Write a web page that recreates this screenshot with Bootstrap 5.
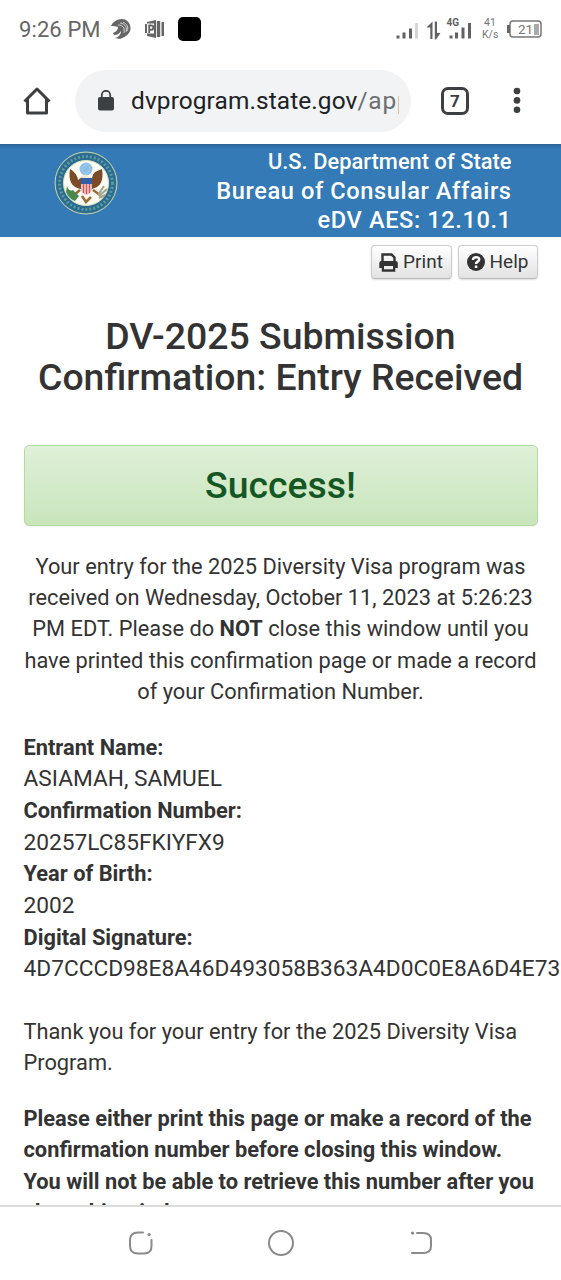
<!DOCTYPE html>
<html lang="en">
<head>
<meta charset="utf-8">
<meta name="viewport" content="width=device-width, initial-scale=1">
<title>DV-2025 Submission Confirmation</title>
<link href="https://cdn.jsdelivr.net/npm/bootstrap@5.3.0/dist/css/bootstrap.min.css" rel="stylesheet">
<style>
body{font-family:Roboto,sans-serif;font-size:21.8px;line-height:31.2px;color:#333;height:1280px;background:#fff}
svg{display:block;flex:none}
.status{height:57px;color:#666;padding:0 19px 0 19px}
.clock{font-size:22px;letter-spacing:.1px;width:92px;white-space:nowrap;padding-top:2px}
.appbox{width:23px;height:24px;border-radius:5px;background:#000}
.net{font-size:10.5px;line-height:12px;color:#777;width:16px}
.toolbar{height:87px;padding:0 0 0 23px}
.urlbar{width:336px;height:62px;background:#f1f3f4;border-radius:31px;padding-left:23px;margin-left:24px;color:#202124}
.url{font-size:24.4px;letter-spacing:.12px;width:268px;overflow:hidden;white-space:nowrap}
.url span{color:#6b6f73;letter-spacing:.8px}
.tabs{width:28px;height:28px;border:3px solid #3c4043;border-radius:7px;font-size:17px;font-weight:700;line-height:22px;color:#3c4043;margin-left:30px;text-align:center}
.site{height:93px;background:linear-gradient(#2e6396 0,#337ab7 5px);color:#fff;font-weight:500;padding:3px 50px 0 54px}
.site .org{line-height:29.5px;font-size:23.6px;letter-spacing:.6px;margin-right:-.6px}
.site .org :first-child{font-size:21.8px;letter-spacing:.05px}
.tool{height:34px;border:1px solid #ccc;border-bottom-color:#bbb;border-radius:4px;background:linear-gradient(#fff,#e2e2e2);box-shadow:0 1px 2px rgba(0,0,0,.14);font-size:19px;line-height:20px;color:#333;padding:0;white-space:nowrap}
h1{font-size:37.4px;line-height:41px;font-weight:500;margin:37px 0 47px;white-space:nowrap}
.ok{height:81px;border:1px solid #b2dba1;border-radius:5px;background:linear-gradient(#dff0d8,#c8e5bc);box-shadow:0 1px 2px rgba(0,0,0,.06);color:#155724;font-size:37.4px;font-weight:500}
.page{padding:0 23.5px;white-space:nowrap}
dl div{height:63.2px}
dt{height:31.4px}
dd{margin:0;font-size:22.7px}
dt,b{font-weight:700}
.nav3{height:75px;border-top:2px solid #dcdcdc;background:#fff;padding-bottom:2px}
</style>
</head>
<body class="d-flex flex-column overflow-hidden">
<div class="status d-flex align-items-center flex-shrink-0">
  <span class="clock">9:26 PM</span>
  <svg width="20" height="20" viewBox="0 0 20 20"><path d="M0 7C3 0 14-3 18 4c4 7 0 13-9 16l-5-1c4-1 6-4 6-7-2 3-4 4-7 4l-1-2c3-1 5-3 5-6-2-1-5-1-7-1z" fill="#666"/><path d="M7 6c5 0 7 3 6 8M9 4c6 1 7 5 6 9M12 3c4 2 6 5 4 9" stroke="#eee" stroke-width=".8" fill="none"/></svg>
  <svg style="margin-left:14px" width="20" height="20" viewBox="0 0 20 20"><path d="M2 3 11 1v18L2 17z" fill="#666"/><path d="M11.800 2h3.400v16h-3.400zM16.500 3h2.500v14h-2.500z" fill="#666"/><path d="M1 4.500h8v10H1z" fill="#fff"/><path d="M0 5h2v9H0z" fill="#666"/><path d="M4.200 14V6.500h2a2.100 2.100 0 0 1 0 4.300h-2" stroke="#666" stroke-width="1.900" fill="none"/></svg>
  <span class="appbox" style="margin-left:13px"></span>
  <svg class="ms-auto" width="77" height="24" viewBox="0 0 77 24" fill="#626262"><path d="M.5 18.500h3v3h-3zM6.500 15.500h3v6h-3zM13 11.500h3v10h-3z"/><path d="M19 6h3v15.500h-3z" fill="#d5d5d5"/><path d="M36.500 4.500V22h-2.200V10.500H30.500zM38.800 4.500H41V16h3.500l-4.500 6.500h-1.200zM53.500 18.500h3v3h-3zM59 15.500h3v6h-3zM65.500 10.500h3v11h-3zM72 6h3v15.500h-3z"/><text x="50.500" y="9" font-size="10" font-weight="700">4G</text></svg>
  <div class="net text-center" style="margin-left:9px">41<br>K/s</div>
  <svg style="margin-left:9px" width="35" height="18" viewBox="0 0 35 18"><rect x="3" y="1" width="31" height="16" rx="3" fill="none" stroke="#777" stroke-width="1.500"/><path d="M0 5h3v8H0z" fill="#666"/><path d="M27 4h5v11h-5z" fill="#aaa"/><text x="11" y="14" font-size="13.500" fill="#777">21</text></svg>
</div>
<div class="toolbar d-flex align-items-center flex-shrink-0">
  <svg width="28" height="28" viewBox="0 0 28 28"><path d="M1.500 14.500 14 2l12.500 12.500M4.500 12v14h19V12" fill="none" stroke="#3c4043" stroke-width="3" stroke-linejoin="round"/></svg>
  <div class="urlbar d-flex align-items-center">
    <svg width="16" height="21" viewBox="0 0 16 21"><rect y="7" width="16" height="13.500" rx="2" fill="#3c4043"/><path d="M3.800 8V5a4.200 4.200 0 0 1 8.400 0v3" fill="none" stroke="#3c4043" stroke-width="1.800"/></svg>
    <div class="url" style="margin-left:17px">dvprogram.state.gov<span>/app</span></div>
  </div>
  <div class="tabs">7</div>
  <svg style="margin-left:44px" width="8" height="27" viewBox="0 0 8 27" fill="#3c4043"><circle cx="4" cy="4" r="3.300"/><circle cx="4" cy="13.400" r="3.300"/><circle cx="4" cy="22.800" r="3.300"/></svg>
</div>
<header class="site d-flex justify-content-between flex-shrink-0">
  <svg style="margin-top:4px" width="64" height="64" viewBox="0 0 64 64"><circle cx="32" cy="32" r="31" fill="#4d93a4" stroke="#c9d0a0" stroke-width="1"/><circle cx="32" cy="32" r="26.500" fill="none" stroke="#2a6b94" stroke-width="7"/><circle cx="32" cy="32" r="26.500" fill="none" stroke="#5f9a9b" stroke-width="3" stroke-dasharray="2 2"/><circle cx="32" cy="32" r="22.500" fill="#fcfcf5" stroke="#e1e0b5"/><circle cx="32" cy="18" r="6.500" fill="#8cc0e6"/><circle cx="32" cy="18" r="4" fill="none" stroke="#b5d9f0" stroke-dasharray="1 1"/><path d="M16 18q-3 18 11 20l4-10 6 10q14-2 11-20l-5 2q-5 2-5 9l-4-1-3-3-3 1-4 3q-1-7-8-11z" fill="#7b4b28"/><path d="M27 26q4-5 8 0l-2 3h-4z" fill="#eee8cf"/><path d="M27 28h11v10q-1 5-5.500 6-5.500-1-5.500-6z" fill="#eebbb9"/><path d="M27 27h11v6H27z" fill="#315fa5"/><path d="M29.500 33v9m3-9v10m3-10v9" stroke="#cc5b60" stroke-width="1.200"/><path d="M26 39 20 44M39 39l7 5M28 45l4 6 5-5" stroke="#9b6a34" stroke-width="2.500" fill="none"/><path d="M13 35q2 6 6 4l6 6-4 5q-6-2-9-9z" fill="#4b8750"/><path d="m44 44 6-9m-5 10 8-7m-8 9 6-3" stroke="#a4a28c" stroke-width="2"/></svg>
  <div class="org text-end text-nowrap"><div>U.S. Department of State</div><div>Bureau of Consular Affairs</div><div>eDV AES: 12.10.1</div></div>
</header>
<main class="page flex-grow-1 overflow-hidden">
  <div class="d-flex justify-content-end" style="padding-top:8px;gap:6px">
    <button class="tool btn d-flex align-items-center justify-content-center" style="width:81px;gap:5px"><svg width="19" height="19" viewBox="0 0 19 19"><path d="M3.500 9V1.500h9l3 3V9" fill="none" stroke="#333" stroke-width="2.400"/><path d="M.3 15V10q0-2 2-2h14.500q2 0 2 2v5h-2.500v3.800H2.800V15z" fill="#333"/><path d="M5 13h9v3.300H5z" fill="#eee"/></svg>Print</button>
    <button class="tool btn d-flex align-items-center justify-content-center" style="width:80px;gap:5px"><svg width="18" height="18" viewBox="0 0 18 18"><circle cx="9" cy="9" r="9" fill="#333"/><path d="M6 7c0-4 6.500-3.500 6.200-.3C12 8.800 9 8.600 9 11" fill="none" stroke="#fff" stroke-width="2.500"/><path d="M7.800 12.500h2.500V15H7.800z" fill="#fff"/></svg>Help</button>
  </div>
  <h1 class="text-center">DV-2025 Submission<br>Confirmation: Entry Received</h1>
  <div class="ok d-flex align-items-center justify-content-center">Success!</div>
  <p class="text-center" style="margin:25px -8px">Your entry for the 2025 Diversity Visa program was<br>received on Wednesday, October 11, 2023 at 5:26:23<br>PM EDT. Please do <b>NOT</b> close this window until you<br>have printed this confirmation page or made a record<br>of your Confirmation Number.</p>
  <dl class="mb-0">
    <div><dt>Entrant Name:</dt><dd>ASIAMAH, SAMUEL</dd></div>
    <div><dt>Confirmation Number:</dt><dd>20257LC85FKIYFX9</dd></div>
    <div><dt>Year of Birth:</dt><dd>2002</dd></div>
    <div><dt>Digital Signature:</dt><dd>4D7CCCD98E8A46D493058B363A4D0C0E8A6D4E73</dd></div>
  </dl>
  <p style="margin:31px 0 25px">Thank you for your entry for the 2025 Diversity Visa<br>Program.</p>
  <p class="mb-0"><b>Please either print this page or make a record of the<br>confirmation number before closing this window.<br>You will not be able to retrieve this number after you<br>close this window.</b></p>
</main>
<footer class="nav3 flex-shrink-0 d-flex justify-content-center align-items-center" style="gap:114px">
  <svg width="26" height="26" viewBox="0 0 26 26" fill="none" stroke="#8a8a8a" stroke-width="2" stroke-linecap="round"><path d="M15 2.500h-5Q2 2.500 2 10v6q0 7.500 8 7.500h6q7.500 0 7.500-7.500v-6"/><path d="M21 4.500h.2" stroke-width="3.200"/></svg>
  <svg width="26" height="28" viewBox="0 0 26 28"><circle cx="13" cy="14" r="12" fill="none" stroke="#8a8a8a" stroke-width="2"/></svg>
  <svg width="26" height="26" viewBox="0 0 26 26" fill="none" stroke="#8a8a8a" stroke-width="2" stroke-linecap="round"><path d="M9 3h6q8 0 8 7v6q0 7-8 7H4"/><path d="M4.500 3h.2" stroke-width="3.200"/></svg>
</footer>
<script src="https://cdn.jsdelivr.net/npm/bootstrap@5.3.0/dist/js/bootstrap.bundle.min.js"></script>
</body>
</html>
